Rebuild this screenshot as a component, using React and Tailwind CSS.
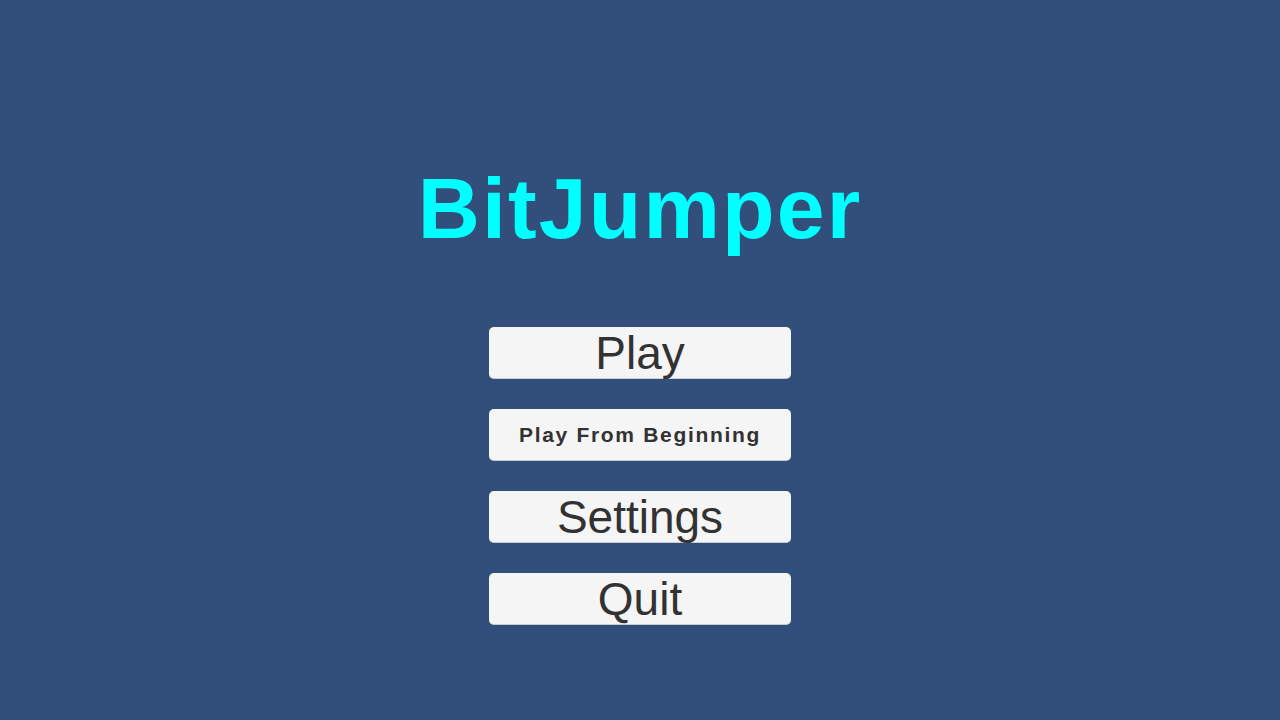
export default function App() {
    const buttons = [
        { label: 'Play', cls: 'text-[46px] font-normal' },
        { label: 'Play From Beginning', cls: 'text-[21px] font-bold tracking-[0.08em]' },
        { label: 'Settings', cls: 'text-[46px] font-normal' },
        { label: 'Quit', cls: 'text-[46px] font-normal' },
    ];

    return (
        <div className="w-[1280px] h-[720px] bg-[#324f7b] flex flex-col items-center font-['Liberation_Sans',Arial,sans-serif]">
            {/* Title */}
            <h1 className="mt-[160px] text-[86px] leading-[96px] font-bold tracking-[0.025em] text-[#00ffff]">
                BitJumper
            </h1>

            {/* Menu */}
            <div className="mt-[71px] flex flex-col gap-[30px]">
                {buttons.map(b => (
                    <button
                        key={b.label}
                        className={`w-[302px] h-[52px] rounded-[5px] bg-[#f5f5f5] border-b border-[#c9ccd2] text-[#323232] flex items-center justify-center leading-none ${b.cls}`}
                    >
                        {b.label}
                    </button>
                ))}
            </div>
        </div>
    );
}
